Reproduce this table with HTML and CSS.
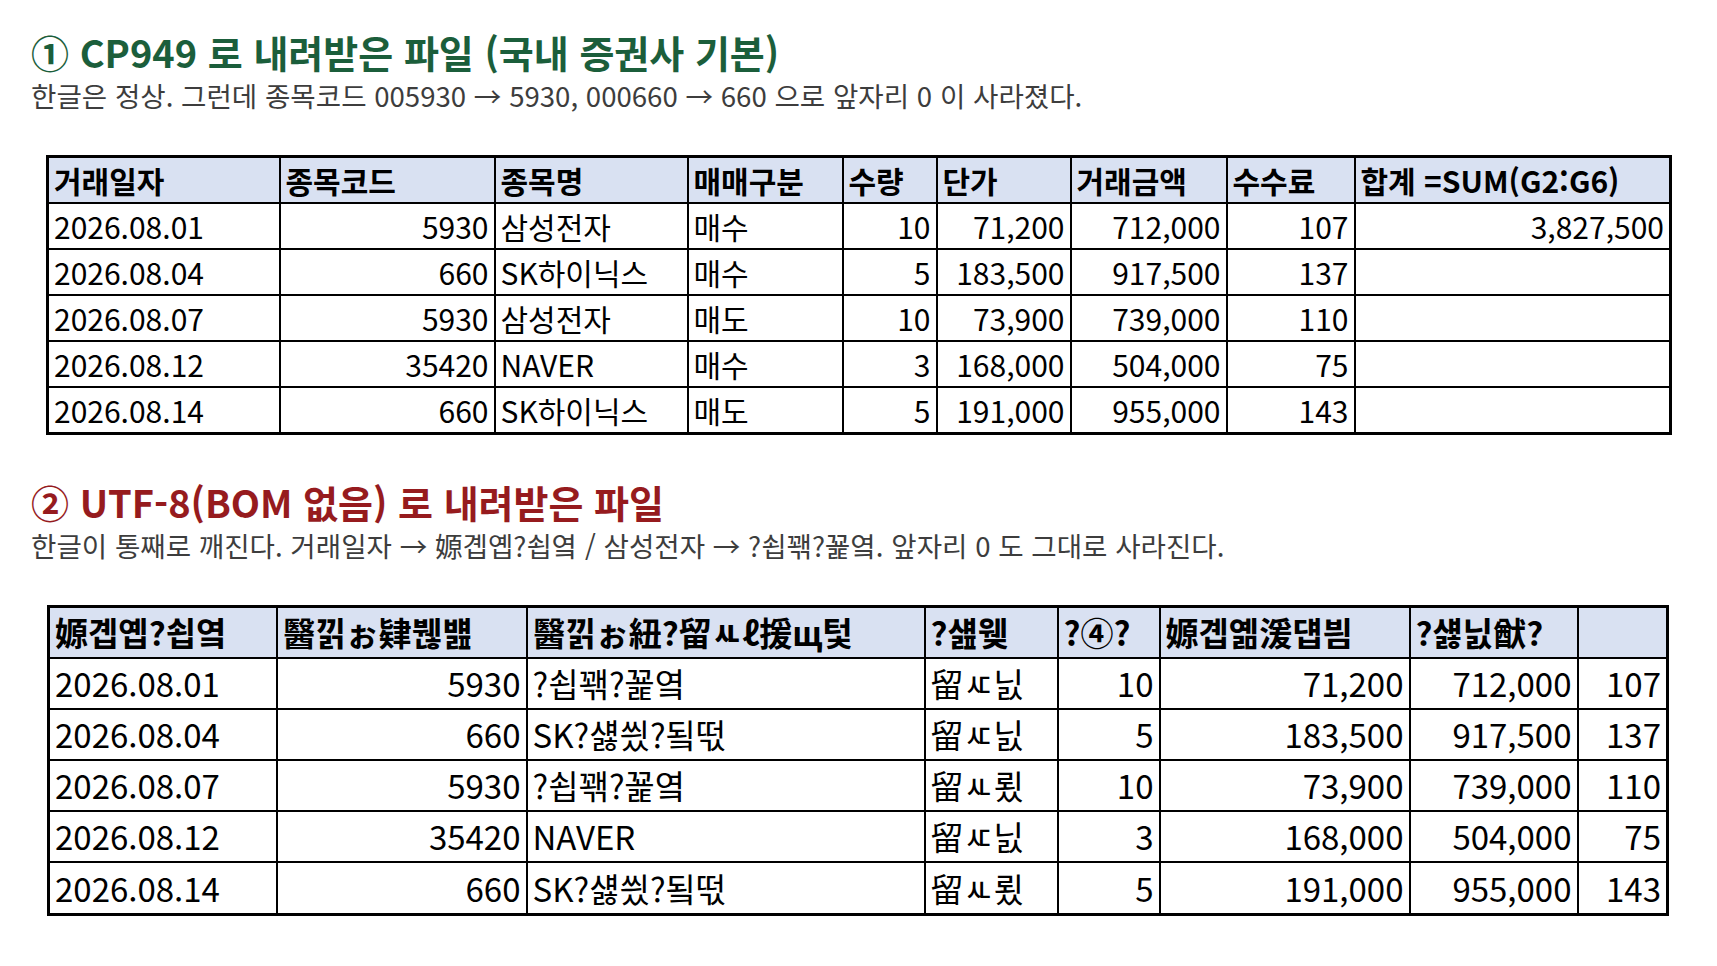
FILE: index.html
```html
<!DOCTYPE html>
<html lang="ko">
<head>
<meta charset="utf-8">
<title>CP949 vs UTF-8</title>
<link rel="stylesheet" href="styles.css">
</head>
<body>
<main class="page">
  <section class="block b1">
    <h1 class="title green">① CP949 로 내려받은 파일 (국내 증권사 기본)</h1>
    <p class="desc">한글은 정상. 그런데 종목코드 005930 → 5930, 000660 → 660 으로 앞자리 0 이 사라졌다.</p>
    <table class="sheet s1">
      <colgroup>
        <col class="w1a"><col class="w1b"><col class="w1c"><col class="w1d"><col class="w1e"><col class="w1f"><col class="w1g"><col class="w1h"><col class="w1i">
      </colgroup>
      <thead>
        <tr><th>거래일자</th><th>종목코드</th><th>종목명</th><th>매매구분</th><th>수량</th><th>단가</th><th>거래금액</th><th>수수료</th><th>합계 =SUM(G2:G6)</th></tr>
      </thead>
      <tbody>
        <tr><td>2026.08.01</td><td class="r">5930</td><td>삼성전자</td><td>매수</td><td class="r">10</td><td class="r">71,200</td><td class="r">712,000</td><td class="r">107</td><td class="r">3,827,500</td></tr>
        <tr><td>2026.08.04</td><td class="r">660</td><td>SK하이닉스</td><td>매수</td><td class="r">5</td><td class="r">183,500</td><td class="r">917,500</td><td class="r">137</td><td></td></tr>
        <tr><td>2026.08.07</td><td class="r">5930</td><td>삼성전자</td><td>매도</td><td class="r">10</td><td class="r">73,900</td><td class="r">739,000</td><td class="r">110</td><td></td></tr>
        <tr><td>2026.08.12</td><td class="r">35420</td><td>NAVER</td><td>매수</td><td class="r">3</td><td class="r">168,000</td><td class="r">504,000</td><td class="r">75</td><td></td></tr>
        <tr><td>2026.08.14</td><td class="r">660</td><td>SK하이닉스</td><td>매도</td><td class="r">5</td><td class="r">191,000</td><td class="r">955,000</td><td class="r">143</td><td></td></tr>
      </tbody>
    </table>
  </section>
  <section class="block b2">
    <h1 class="title red">② UTF-8(BOM 없음) 로 내려받은 파일</h1>
    <p class="desc">한글이 통째로 깨진다. 거래일자 → 嫄곕옙?쇱옄 / 삼성전자 → ?쇱꽦?꾩옄. 앞자리 0 도 그대로 사라진다.</p>
    <table class="sheet s2">
      <colgroup>
        <col class="w2a"><col class="w2b"><col class="w2c"><col class="w2d"><col class="w2e"><col class="w2f"><col class="w2g"><col class="w2h">
      </colgroup>
      <thead>
        <tr><th>嫄곕옙?쇱옄</th><th>醫낅ぉ肄붾뱶</th><th>醫낅ぉ紐?留ㅻℓ援щ텇</th><th>?섎웾</th><th>?④?</th><th>嫄곕옒湲덉븸</th><th>?섏닔猷?</th><th></th></tr>
      </thead>
      <tbody>
        <tr><td>2026.08.01</td><td class="r">5930</td><td>?쇱꽦?꾩옄</td><td>留ㅼ닔</td><td class="r">10</td><td class="r">71,200</td><td class="r">712,000</td><td class="r">107</td></tr>
        <tr><td>2026.08.04</td><td class="r">660</td><td>SK?섏씠?됰떣</td><td>留ㅼ닔</td><td class="r">5</td><td class="r">183,500</td><td class="r">917,500</td><td class="r">137</td></tr>
        <tr><td>2026.08.07</td><td class="r">5930</td><td>?쇱꽦?꾩옄</td><td>留ㅻ룄</td><td class="r">10</td><td class="r">73,900</td><td class="r">739,000</td><td class="r">110</td></tr>
        <tr><td>2026.08.12</td><td class="r">35420</td><td>NAVER</td><td>留ㅼ닔</td><td class="r">3</td><td class="r">168,000</td><td class="r">504,000</td><td class="r">75</td></tr>
        <tr><td>2026.08.14</td><td class="r">660</td><td>SK?섏씠?됰떣</td><td>留ㅻ룄</td><td class="r">5</td><td class="r">191,000</td><td class="r">955,000</td><td class="r">143</td></tr>
      </tbody>
    </table>
  </section>
</main>
</body>
</html>
```

FILE: styles.css
```css
html, body {
  margin: 0;
  padding: 0;
  background: #ffffff;
}
body {
  font-family: "Noto Sans CJK KR", "Noto Sans", sans-serif;
  color: #000;
}
.page {
  padding: 30px 0 0 31px;
}
.block {
  display: flex;
  flex-direction: column;
  align-items: flex-start;
}
.b2 {
  margin-top: 45px;
}
.title {
  margin: 0;
  font-size: 38px;
  line-height: 44px;
  font-weight: 700;
}
.green { color: #1b5e3b; }
.red { color: #961b1e; }
.desc {
  margin: 5px 0 0 0;
  font-size: 27.6px;
  line-height: 32px;
  color: #3d3d3d;
}
.sheet {
  border-collapse: collapse;
  table-layout: fixed;
  border: 3px solid #000;
}
.sheet th, .sheet td {
  border: 2px solid #000;
  padding: 0 5px;
  white-space: nowrap;
  overflow: hidden;
  text-align: left;
  vertical-align: middle;
}
.sheet th {
  background: #d9e1f2;
  font-weight: 700;
}
.sheet td.r { text-align: right; }

.s1 {
  margin: 43.5px 0 0 15px;
  width: 1623px;
  font-size: 30px;
}
.s1 th, .s1 td { height: 44px; line-height: 44px; }
.w1a { width: 232px; } .w1b { width: 215px; } .w1c { width: 193px; }
.w1d { width: 155px; } .w1e { width: 94px; } .w1f { width: 134px; }
.w1g { width: 156px; } .w1h { width: 128px; } .w1i { width: 316px; }

.s2 {
  margin: 44px 0 0 16px;
  width: 1619px;
  font-size: 33px;
}
.s2 th, .s2 td { height: 49.2px; line-height: 49px; }
.w2a { width: 228px; } .w2b { width: 250px; } .w2c { width: 398px; }
.w2d { width: 133px; } .w2e { width: 102px; } .w2f { width: 250px; }
.w2g { width: 168px; } .w2h { width: 90px; }
```
